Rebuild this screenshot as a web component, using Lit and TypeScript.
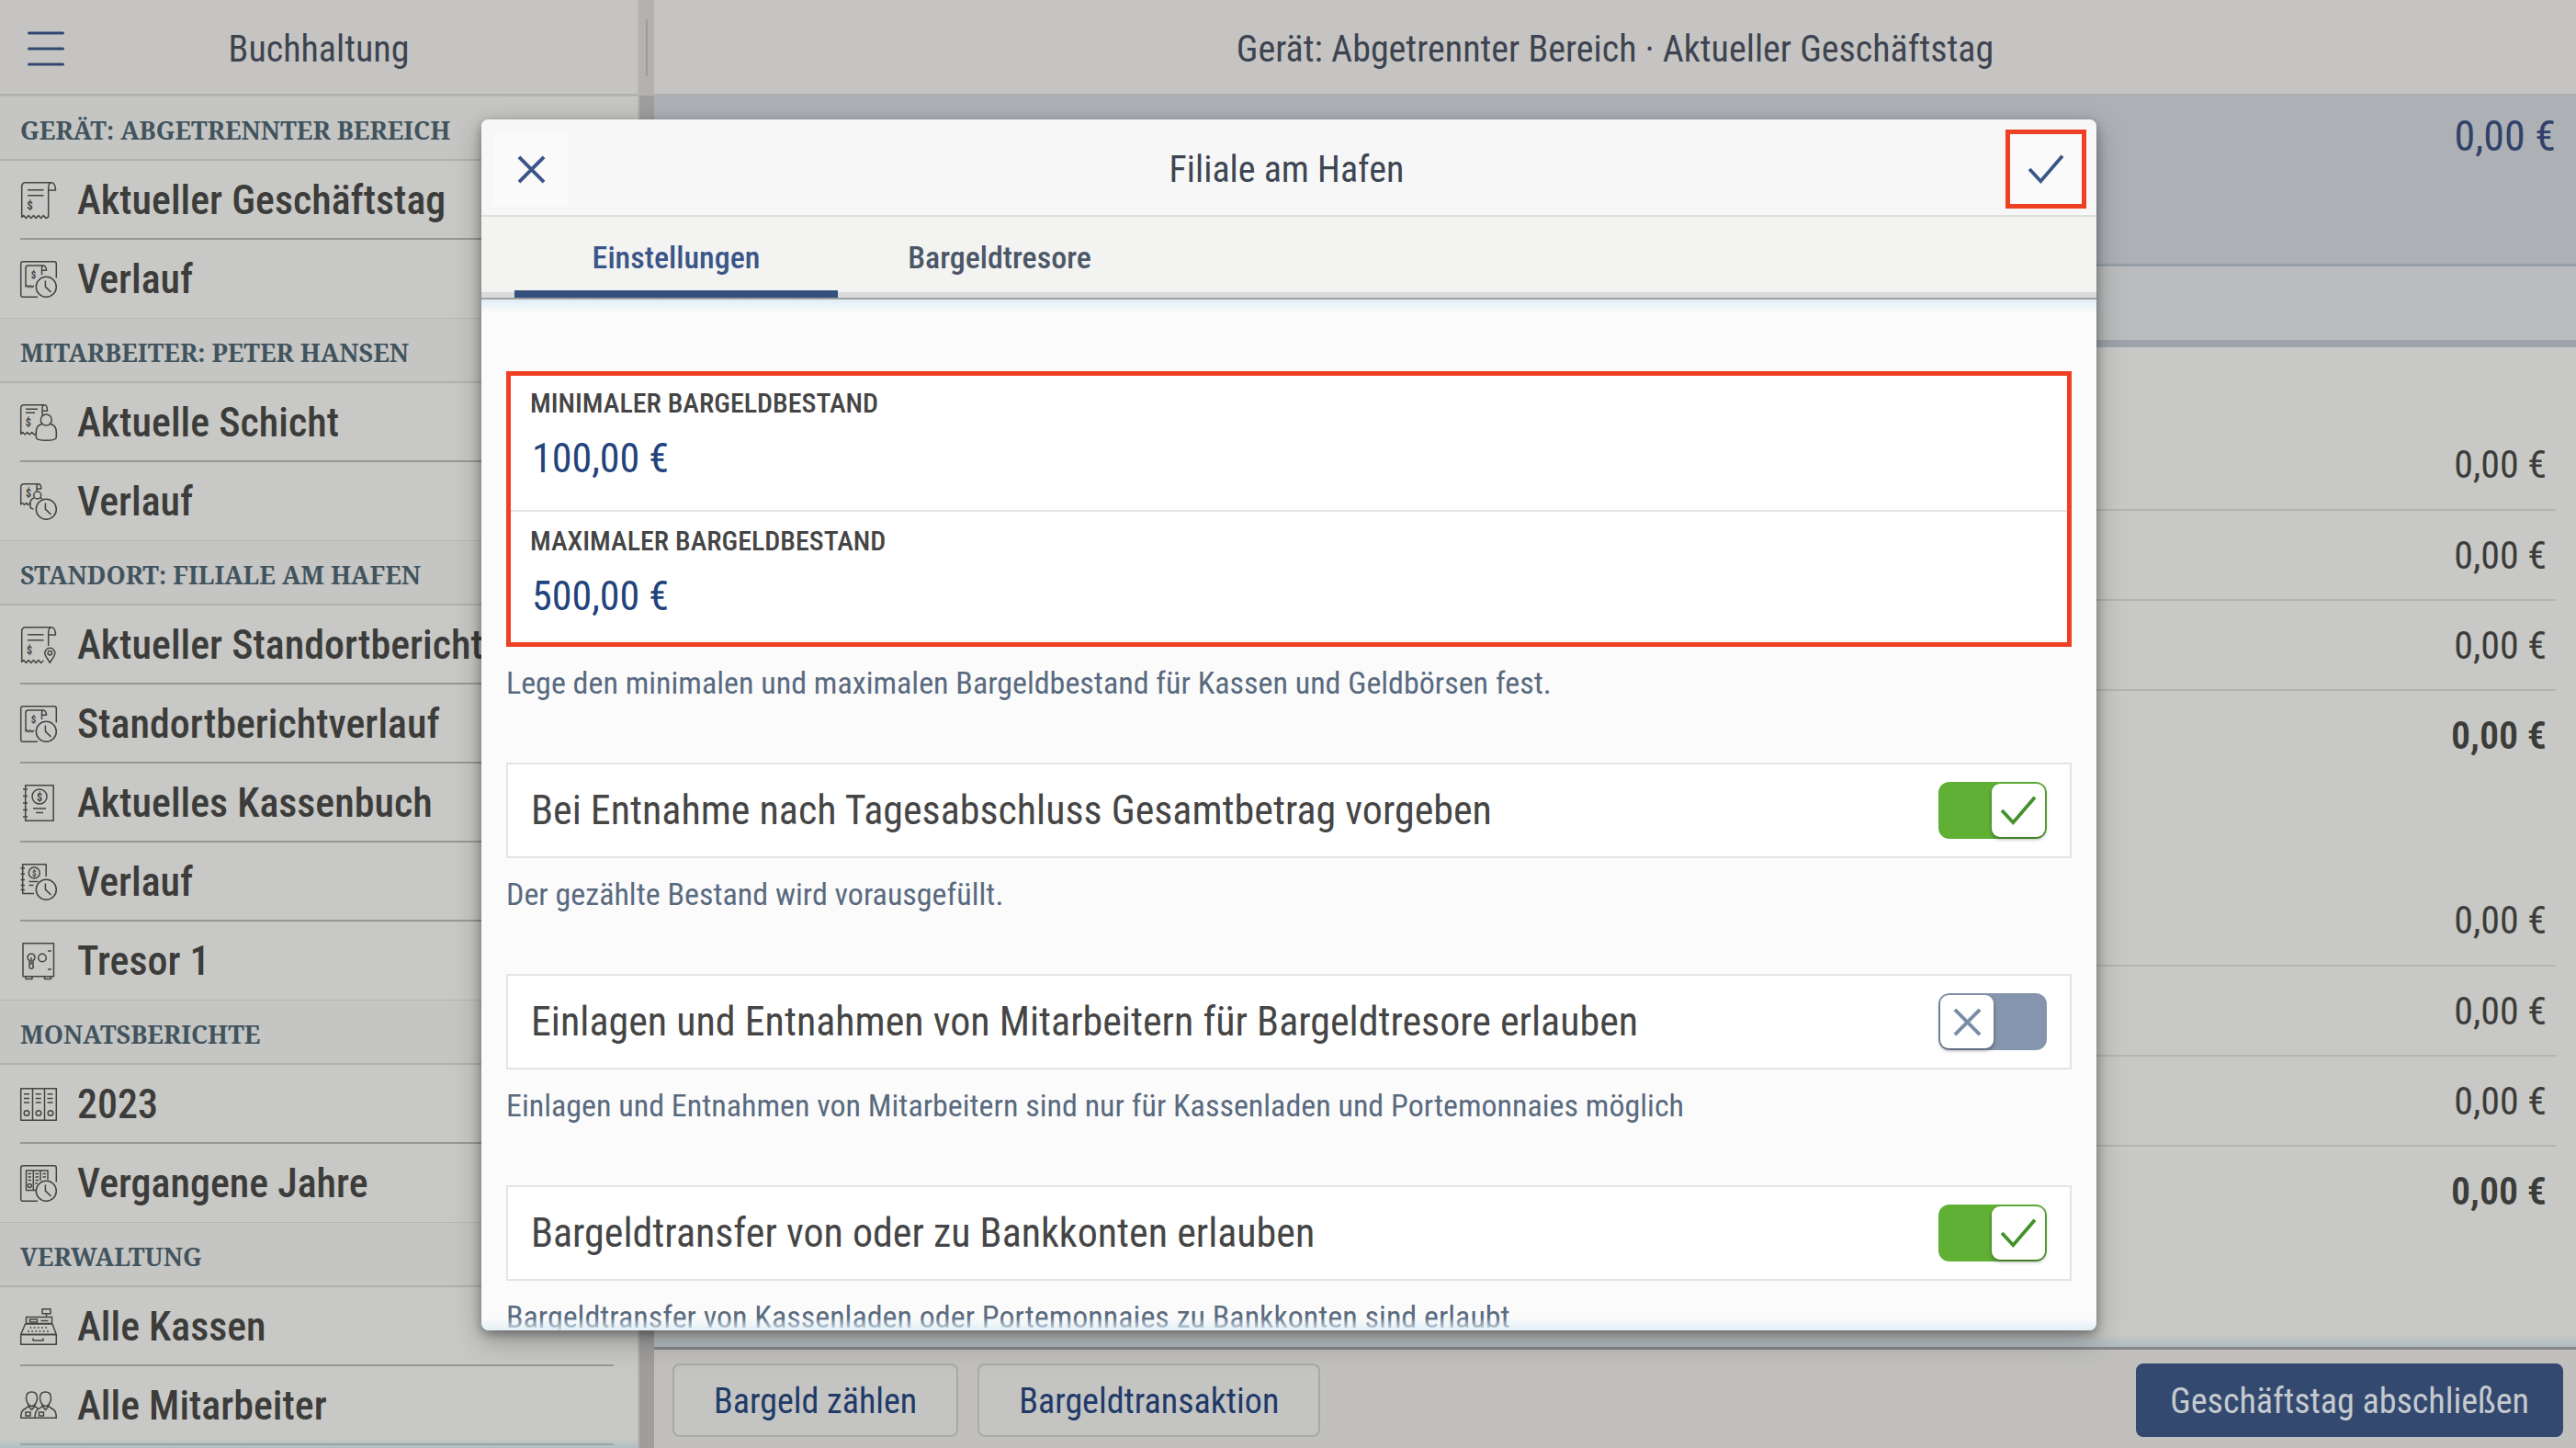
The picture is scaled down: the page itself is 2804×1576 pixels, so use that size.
import { LitElement, html, svg, css, nothing, SVGTemplateResult } from "lit";
import { customElement, state } from "lit/decorators.js";
import { classMap } from "lit/directives/class-map.js";

type IconName =
  | "receipt" | "history" | "shift" | "shiftHistory" | "location"
  | "cashbook" | "cashbookHistory" | "safe" | "binders" | "bindersHistory"
  | "register" | "staff";

interface NavSection {
  title: string;
  items: { icon: IconName; label: string }[];
}

const SECTIONS: NavSection[] = [
  {
    title: "Gerät: Abgetrennter Bereich",
    items: [
      { icon: "receipt", label: "Aktueller Geschäftstag" },
      { icon: "history", label: "Verlauf" },
    ],
  },
  {
    title: "Mitarbeiter: Peter Hansen",
    items: [
      { icon: "shift", label: "Aktuelle Schicht" },
      { icon: "shiftHistory", label: "Verlauf" },
    ],
  },
  {
    title: "Standort: Filiale am Hafen",
    items: [
      { icon: "location", label: "Aktueller Standortbericht" },
      { icon: "history", label: "Standortberichtverlauf" },
      { icon: "cashbook", label: "Aktuelles Kassenbuch" },
      { icon: "cashbookHistory", label: "Verlauf" },
      { icon: "safe", label: "Tresor 1" },
    ],
  },
  {
    title: "Monatsberichte",
    items: [
      { icon: "binders", label: "2023" },
      { icon: "bindersHistory", label: "Vergangene Jahre" },
    ],
  },
  {
    title: "Verwaltung",
    items: [
      { icon: "register", label: "Alle Kassen" },
      { icon: "staff", label: "Alle Mitarbeiter" },
    ],
  },
];

const clock = svg`<circle cx="28.3" cy="28.3" r="11"/><path d="M27.4 21.5v6.6l6 5.8"/>`;
const dollar = (x: number, y: number, size: number) =>
  svg`<text class="sign" x=${x} y=${y} font-size=${size} text-anchor="middle">$</text>`;

const ICONS: Record<IconName, SVGTemplateResult> = {
  receipt: svg`
    <path d="M30.7 38.5V6c0-3 1.500-5.300 3.700-5.300S38.500 4 38.500 9h-7.800M34 .7H5.500C3.300.7 1.700 2.500 1.700 5v33.500l2-2 2.700 3 2.700-3 2.700 3 2.700-3 2.700 3 2.700-3 2.700 3 2.700-3 2.700 3 2.700-1.500"/>
    <path d="M8 8.700h17.500M8 14.700h17.500"/>${dollar(10.5, 30, 13)}`,
  history: svg`
    <path d="M19 39.200H3c-1.300 0-2.300-1-2.300-2.300V3C.7 1.700 1.700.7 3 .7h34c1.300 0 2.300 1 2.300 2.300v15.500"/>
    <path d="M23.500 15V8c0-2 .8-3 2-3s3 2 3 5.300h-5M26 5H8.500C7 5 6 6 6 7.500V28l1.500-1.200 1.800 2 1.800-2 1.800 2 2-2"/>
    ${dollar(14.500, 18.500, 11)}${clock}`,
  shift: svg`
    <path d="M24 13V5c0-2.500 1-4.300 2.500-4.300s3 2 3 6.500H24M26.500.7H4C2 .7.7 2 .7 4v28.500l2-2 2.500 2.500 2.500-2.500 2.500 2.500 2.500-2.500 2.500 2.500 2-1"/>
    <path d="M6 5.300h13M6 9.300h10"/>${dollar(8.700, 24, 12)}
    <circle cx="28.300" cy="17" r="6"/>
    <path d="M24 21.500c-4 .7-6.700 4-6.700 9v5.500c0 2 4.500 3.300 11 3.300s11-1.300 11-3.300v-5.500c0-5-2.700-8.300-6.700-9"/>`,
  shiftHistory: svg`
    <path d="M18 8V4c0-2 .8-3.300 2-3.300s2.800 1.600 2.800 5.300H18M20 .7H4C2 .7.7 2 .7 4v19l1.800-1.500 2 2 2-2 2 2 2-2"/>
    ${dollar(9, 14.500, 12)}
    <circle cx="18.700" cy="13" r="4"/>
    <path d="M15 16c-2.500.7-4 3-4 6v3.500c0 1.300 1 2.200 3.500 2.500M22 16c1 .2 1.500.5 2 1"/>${clock}`,
  location: svg`
    <path d="M30.700 21V6c0-3 1.500-5.300 3.700-5.300S38.500 4 38.500 9h-7.800M34 .7H5.500C3.300.7 1.700 2.500 1.700 5v33.500l2-2 2.700 3 2.700-3 2.700 3 2.700-3 2.700 3 2.700-3 2.700 3 2.700-2.500"/>
    <path d="M8 8.700h17.500M8 14.700h17.500"/>${dollar(10, 30, 12)}
    <path d="M32.300 39.300c-2-4-5.500-7-5.500-10.500a5.500 5.500 0 0 1 11 0c0 3.500-3.500 6.500-5.500 10.500z"/><circle cx="32.300" cy="28.800" r="2.200"/>`,
  cashbook: svg`
    <path d="M5.700.7h30.500v38.600H5.700z"/>
    <path d="M3 5h5M3 12.500h5M3 20h5M3 27.500h5M3 35h5M14 26h14M17 30.500h8"/>
    <circle cx="21" cy="13" r="8"/>${dollar(21, 17.500, 12)}`,
  cashbookHistory: svg`
    <path d="M15 32.500H2.700V.7h25.500V14"/>
    <path d="M.5 5h4.500M.5 11.300h4.500M.5 17.500h4.500M.5 23.500h4.500M.5 28.500h4.500M9.500 19.500h10M9.500 23.500h5"/>
    <circle cx="15.300" cy="10" r="6"/>${dollar(15.300, 13.500, 9)}${clock}`,
  safe: svg`
    <path d="M3 .7h33.500v36H3zM6 37v2.500h7V37M26.500 37v2.500h7V37M30 9h4M30 29h4"/>
    <path d="M10 19.500a4 4 0 1 1 4 0v5.500a2 2 0 0 1-4 2z"/><path d="M12 16v8"/><circle cx="24" cy="16.500" r="4.300"/>`,
  binders: svg`
    <path d="M.7 2.700h38.600v34.600H.7zM13.500 2.700v34.600M26.500 2.700v34.600"/>
    <path d="M4 8.700h6M4 13.500h6M4 18h6M16.800 8.700h6M16.800 13.500h6M16.800 18h6M29.500 8.700h6M29.500 13.500h6M29.500 18h6"/>
    <circle cx="7" cy="29.500" r="2.800"/><circle cx="20" cy="29.500" r="2.800"/><circle cx="33" cy="29.500" r="2.800"/>`,
  bindersHistory: svg`
    <path d="M19 39.200H3c-1.300 0-2.300-1-2.300-2.300V3C.7 1.700 1.700.7 3 .7h34c1.300 0 2.300 1 2.300 2.300v15.500"/>
    <path d="M17 27.500H6.500V6h23.500v10M14.300 6v21.500M22 6v11"/>
    <path d="M8.500 9.500h3.500M8.500 13h3.500M8.500 16.500h3.500M16.500 9.500H20M16.500 13H20M16.500 16.500H20M24.500 9.500H28M24.500 13H28"/>
    <circle cx="10.300" cy="22.500" r="2"/><path d="M16.500 20.500c.5-1 1.500-1 2 0"/>${clock}`,
  register: svg`
    <path d="M24 .7h9v5h-9zM28.500 5.700V9.500M6.500 9.500h28v7h-28z"/>
    <path d="M10.500 12h8v3h-8zM22.500 13.500h8M5.500 17L.7 28.500h38.600L35 17z"/>
    <path d="M.7 28.500h38.600v10.800H.7zM14 32.500v2.500h11v-2.500"/>
    <path stroke-dasharray="1.800 2.400" d="M10.500 21h20M8 25h25"/>`,
  staff: svg`
    <path d="M12.500 5c3.800 0 6 2.500 6 6.500s-2.500 9-6 9-6-5-6-9 2.200-6.500 6-6.500zM27.500 5c3.800 0 6 2.500 6 6.500s-2.500 9-6 9-6-5-6-9 2.200-6.500 6-6.500z"/>
    <path d="M9 19.500c0 2-2.500 3-5 4.500S.7 29 .7 33.300h38.600c0-4.300-.8-7.800-3.300-9.300s-5-2.500-5-4.500M16 19.500c0 2 2 2.800 4 3.800 2-1 4-1.800 4-3.800M9 20.500l3.500 4 3.500-4M24 20.500l3.500 4 3.500-4"/>
    <path d="M20 23.300c-3 1.500-4 4.700-4 10M6 27h5v4H6zM20.500 27h5v4h-5z"/>`,
};

const check = html`<svg class="glyph" viewBox="0 0 44 36" aria-hidden="true"><path d="M3 18l13 14L41 3"/></svg>`;
const cross = html`<svg class="glyph cross" viewBox="0 0 32 32" aria-hidden="true"><path d="M2 2l28 28M30 2L2 30"/></svg>`;

@customElement("app-root")
export class AppRoot extends LitElement {
  @state() private tab = "Einstellungen";
  @state() private switches = [
    {
      id: "preset",
      label: "Bei Entnahme nach Tagesabschluss Gesamtbetrag vorgeben",
      hint: "Der gezählte Bestand wird vorausgefüllt.",
      on: true,
    },
    {
      id: "deposits",
      label: "Einlagen und Entnahmen von Mitarbeitern für Bargeldtresore erlauben",
      hint: "Einlagen und Entnahmen von Mitarbeitern sind nur für Kassenladen und Portemonnaies möglich",
      on: false,
    },
    {
      id: "transfer",
      label: "Bargeldtransfer von oder zu Bankkonten erlauben",
      hint: "Bargeldtransfer von Kassenladen oder Portemonnaies zu Bankkonten sind erlaubt",
      on: true,
    },
  ];

  static styles = css`
    :host {
      display: block;
      height: 100vh;
      overflow: hidden;
      font-family: "Roboto Condensed", "Roboto", "Noto Sans", sans-serif;
      color: #3c3c3a;
      background: #c8c8c6;
    }
    * { box-sizing: border-box; }
    h1, h2, p, ul { margin: 0; padding: 0; font-size: inherit; font-weight: 400; }
    button, input { font: inherit; color: inherit; margin: 0; }
    button { cursor: pointer; }

    .app { display: flex; height: 100%; }
    .sidebar { flex: 0 0 694px; display: flex; flex-direction: column; overflow: hidden; position: relative; }
    .sidebar::after {
      content: ""; position: absolute; inset: auto 0 0 0; height: 10px;
      background: linear-gradient(rgba(160, 185, 192, 0), rgba(160, 185, 192, 0.6));
    }
    .bar {
      flex: 0 0 104px; display: flex; align-items: center; justify-content: center; padding-top: 4px;
      background: #c5c4c2; border-bottom: 2px solid #b0b0ae;
      font-size: 40px; color: #3d4450; position: relative;
    }
    .menu { position: absolute; left: 22px; width: 56px; height: 56px; padding: 8px; background: none; border: 0; color: #334870; }
    .menu svg { display: block; width: 40px; height: 40px; fill: none; stroke: currentColor; stroke-width: 3; stroke-linecap: round; }

    .section-title {
      flex: none; height: 71px; padding: 2px 22px 0; line-height: 70px;
      border-top: 1px solid #b6b6b4; border-bottom: 2px solid #b0b0ae; background: #c5c5c3;
      font-family: "Noto Serif Condensed", "Noto Serif", "DejaVu Serif Condensed", serif;
      font-size: 27px; font-weight: 700; color: #41545e;
      text-transform: uppercase; white-space: nowrap;
    }
    .nav { flex: none; list-style: none; padding: 0 26px 0 22px; margin-bottom: -1px; }
    .nav li { height: 86px; border-bottom: 2px solid #979795; }
    .nav:not(:last-child) li:last-child { border-bottom-color: transparent; }
    .nav a {
      display: flex; align-items: center; gap: 22px; height: 86px;
      color: inherit; text-decoration: none; font-size: 44px; font-weight: 500; white-space: nowrap;
    }
    .icon { flex: none; width: 40px; height: 40px; fill: none; stroke: #444442; stroke-width: 1.5; stroke-linejoin: round; overflow: visible; }
    .sign { fill: #444442; stroke: none; font-weight: 700; }

    .divider { flex: 0 0 18px; display: flex; flex-direction: column; background: #9f9e9c; border-left: 2px solid #b6b5b3; }
    .divider-top { flex: 0 0 104px; display: flex; justify-content: center; align-items: center; background: #b3b2b0; }
    .grip { width: 2px; height: 62px; background: #9c9b99; }

    .main { flex: 1; min-width: 0; display: flex; flex-direction: column; }
    .content { flex: 1; min-height: 0; position: relative; overflow: hidden; }
    .content::after {
      content: ""; position: absolute; inset: auto 0 0 0; height: 14px;
      background: linear-gradient(rgba(175, 188, 194, 0), #afbcc2);
    }
    .banner {
      height: 186px; padding: 16px 22px; text-align: right;
      font-size: 46px; line-height: 56px; color: #30426a;
      background: #adb0b5; border-bottom: 3px solid #989fa9;
    }
    .subbanner { height: 88px; background: #bbbcbe; border-bottom: 8px solid #9ea3ab; }
    .amounts { width: calc(100% - 44px); margin: 79px 22px 0; border-collapse: collapse; font-size: 42px; }
    .amounts + .amounts { margin-top: 104px; }
    .amounts td { height: 98px; padding: 0 10px 0 0; text-align: right; border-bottom: 2px solid #b4b4b2; }
    .amounts tr:last-child td { border-bottom: 0; font-weight: 600; }

    .footer {
      flex: 0 0 110px; display: flex; align-items: center; gap: 21px; padding: 2px 14px 0 20px;
      background: #c1c0be; border-top: 3px solid #878787;
    }
    .button {
      height: 80px; padding: 2px 43px 0; border: 2px solid #a9a9a7; border-radius: 8px;
      background: #c4c4c2; color: #203a68; font-size: 38px; white-space: nowrap;
    }
    .button.primary { margin-left: auto; padding: 2px 35px 0; background: #334970; border-color: #334970; color: #c6c9cd; }

    .overlay { position: absolute; inset: 0; display: flex; align-items: center; justify-content: center; padding: 2px 0 0 2px; }
    .modal {
      width: 90%; max-width: 1758px; height: 90%; max-height: 1318px;
      display: flex; flex-direction: column; overflow: hidden; border-radius: 8px; background: #fbfbfb;
      box-shadow: 0 12px 32px rgba(0, 0, 0, 0.25), 0 4px 12px rgba(0, 0, 0, 0.35);
    }
    .modal-bar {
      flex: 0 0 106px; display: flex; align-items: center; justify-content: space-between;
      padding: 4px 11px 0 14px; background: #f7f7f7; border-bottom: 2px solid #dededd;
      font-size: 40px; color: #3d4652;
    }
    .icon-button { width: 80px; height: 80px; padding: 0; border: 0; background: #fafafa; color: #3a5688; display: grid; place-items: center; }
    .icon-button.marked { width: 88px; height: 86px; border: 5px solid #ee4023; }
    .glyph { width: 42px; height: 34px; fill: none; stroke: currentColor; stroke-width: 4; }
    .glyph.cross { width: 31px; height: 31px; }

    .tabs {
      flex: 0 0 88px; display: flex; padding: 0 36px; background: #f3f3f1;
      border-bottom: 2px solid #a0a0a0; box-shadow: inset 0 -6px #d9dad9;
    }
    .tab {
      flex: 0 0 352px; height: 88px; padding: 8px 0 0; border: 0; border-bottom: 8px solid transparent;
      background: none; color: #4b5767; font-size: 34px; font-weight: 500;
    }
    .tab.active { color: #3a5688; border-bottom-color: #35507f; }

    .modal-body { flex: 1; min-height: 0; overflow: hidden; padding: 78px 27px 0; position: relative; }
    .modal-body::before, .modal-body::after { content: ""; position: absolute; inset: 0 0 auto 0; height: 14px; background: linear-gradient(#dfeef6, #fbfbfb); }
    .modal-body::after { inset: auto 0 0 0; background: linear-gradient(rgba(223, 238, 246, 0), rgba(223, 238, 246, 0.9)); }
    .fields { border: 5px solid #ee4023; background: #fff; }
    .field { display: block; padding: 10px 21px 20px; border-bottom: 2px solid #e4e4e4; }
    .field:last-child { padding: 12px 21px 14px; border-bottom: 0; }
    .caption { display: block; font-size: 30px; line-height: 40px; font-weight: 500; color: #454545; text-transform: uppercase; }
    .value { display: block; width: 100%; height: 72px; margin-top: 4px; padding: 0 2px; border: 0; outline: 0; background: none; font-size: 44px; color: #22437c; }
    .hint { margin: 16px 0 64px; font-size: 34px; line-height: 46px; color: #596a7f; white-space: nowrap; }
    .card {
      display: flex; align-items: center; justify-content: space-between; gap: 24px;
      height: 104px; padding: 0 25px; background: #fff; border: 2px solid #e4e4e4;
      font-size: 44px; color: #454545; white-space: nowrap; cursor: pointer;
    }
    .toggle { display: grid; align-items: center; }
    .toggle > * { grid-area: 1 / 1; }
    .toggle input { appearance: none; width: 118px; height: 62px; border-radius: 12px; background: #8595ae; cursor: pointer; }
    .knob {
      width: 58px; height: 58px; margin: 0 2px; display: grid; place-items: center; pointer-events: none;
      border-radius: 9px; background: #fff; color: #7a8ca8; box-shadow: 0 2px 4px rgba(0, 0, 0, 0.4);
    }
    .on input { background: #5fb035; }
    .on .knob { justify-self: end; color: #42912a; }
  `;

  private flip(id: string) {
    this.switches = this.switches.map((s) => (s.id === id ? { ...s, on: !s.on } : s));
  }

  private renderSidebar() {
    return html`
      <aside class="sidebar">
        <header class="bar">
          <button class="menu" aria-label="Menü">
            <svg viewBox="0 0 40 40"><path d="M1.500 3h37M1.500 20h37M1.500 37h37" /></svg>
          </button>
          <h1>Buchhaltung</h1>
        </header>
        ${SECTIONS.map(
          (section) => html`
            <h2 class="section-title">${section.title}</h2>
            <ul class="nav">
              ${section.items.map(
                (item) => html`<li><a href="#">
                  <svg class="icon" viewBox="0 0 40 40" aria-hidden="true">${ICONS[item.icon]}</svg>
                  <span>${item.label}</span></a></li>`
              )}
            </ul>
          `
        )}
      </aside>
    `;
  }

  private renderAmounts() {
    return html`<table class="amounts"><tbody>
      ${[0, 1, 2, 3].map(() => html`<tr><td>0,00 €</td></tr>`)}
    </tbody></table>`;
  }

  private renderModal() {
    return html`
      <div class="overlay">
        <section class="modal" role="dialog" aria-labelledby="dialog-title">
          <header class="modal-bar">
            <button class="icon-button" aria-label="Schließen">${cross}</button>
            <h2 id="dialog-title">Filiale am Hafen</h2>
            <button class="icon-button marked" aria-label="Speichern">${check}</button>
          </header>
          <nav class="tabs" role="tablist">
            ${["Einstellungen", "Bargeldtresore"].map(
              (name) => html`<button
                role="tab"
                aria-selected=${this.tab === name}
                class=${classMap({ tab: true, active: this.tab === name })}
                @click=${() => (this.tab = name)}
              >${name}</button>`
            )}
          </nav>
          <div class="modal-body">
            <div class="fields">
              <label class="field"><span class="caption">Minimaler Bargeldbestand</span
                ><input class="value" type="text" value="100,00 €" /></label>
              <label class="field"><span class="caption">Maximaler Bargeldbestand</span
                ><input class="value" type="text" value="500,00 €" /></label>
            </div>
            <p class="hint">Lege den minimalen und maximalen Bargeldbestand für Kassen und Geldbörsen fest.</p>
            ${this.switches.map(
              (s) => html`
                <label class="card" for=${s.id}>
                  <span>${s.label}</span>
                  <span class=${classMap({ toggle: true, on: s.on })}>
                    <input id=${s.id} type="checkbox" role="switch" .checked=${s.on} @change=${() => this.flip(s.id)} />
                    <span class="knob">${s.on ? check : cross}</span>
                  </span>
                </label>
                ${s.hint ? html`<p class="hint">${s.hint}</p>` : nothing}
              `
            )}
          </div>
        </section>
      </div>
    `;
  }

  render() {
    return html`
      <div class="app">
        ${this.renderSidebar()}
        <div class="divider"><div class="divider-top"><span class="grip"></span></div></div>
        <main class="main">
          <header class="bar"><h1>Gerät: Abgetrennter Bereich · Aktueller Geschäftstag</h1></header>
          <div class="content">
            <div class="banner">0,00 €</div>
            <div class="subbanner"></div>
            ${this.renderAmounts()} ${this.renderAmounts()}
          </div>
          <footer class="footer">
            <button class="button">Bargeld zählen</button>
            <button class="button">Bargeldtransaktion</button>
            <button class="button primary">Geschäftstag abschließen</button>
          </footer>
        </main>
      </div>
      ${this.renderModal()}
    `;
  }
}
